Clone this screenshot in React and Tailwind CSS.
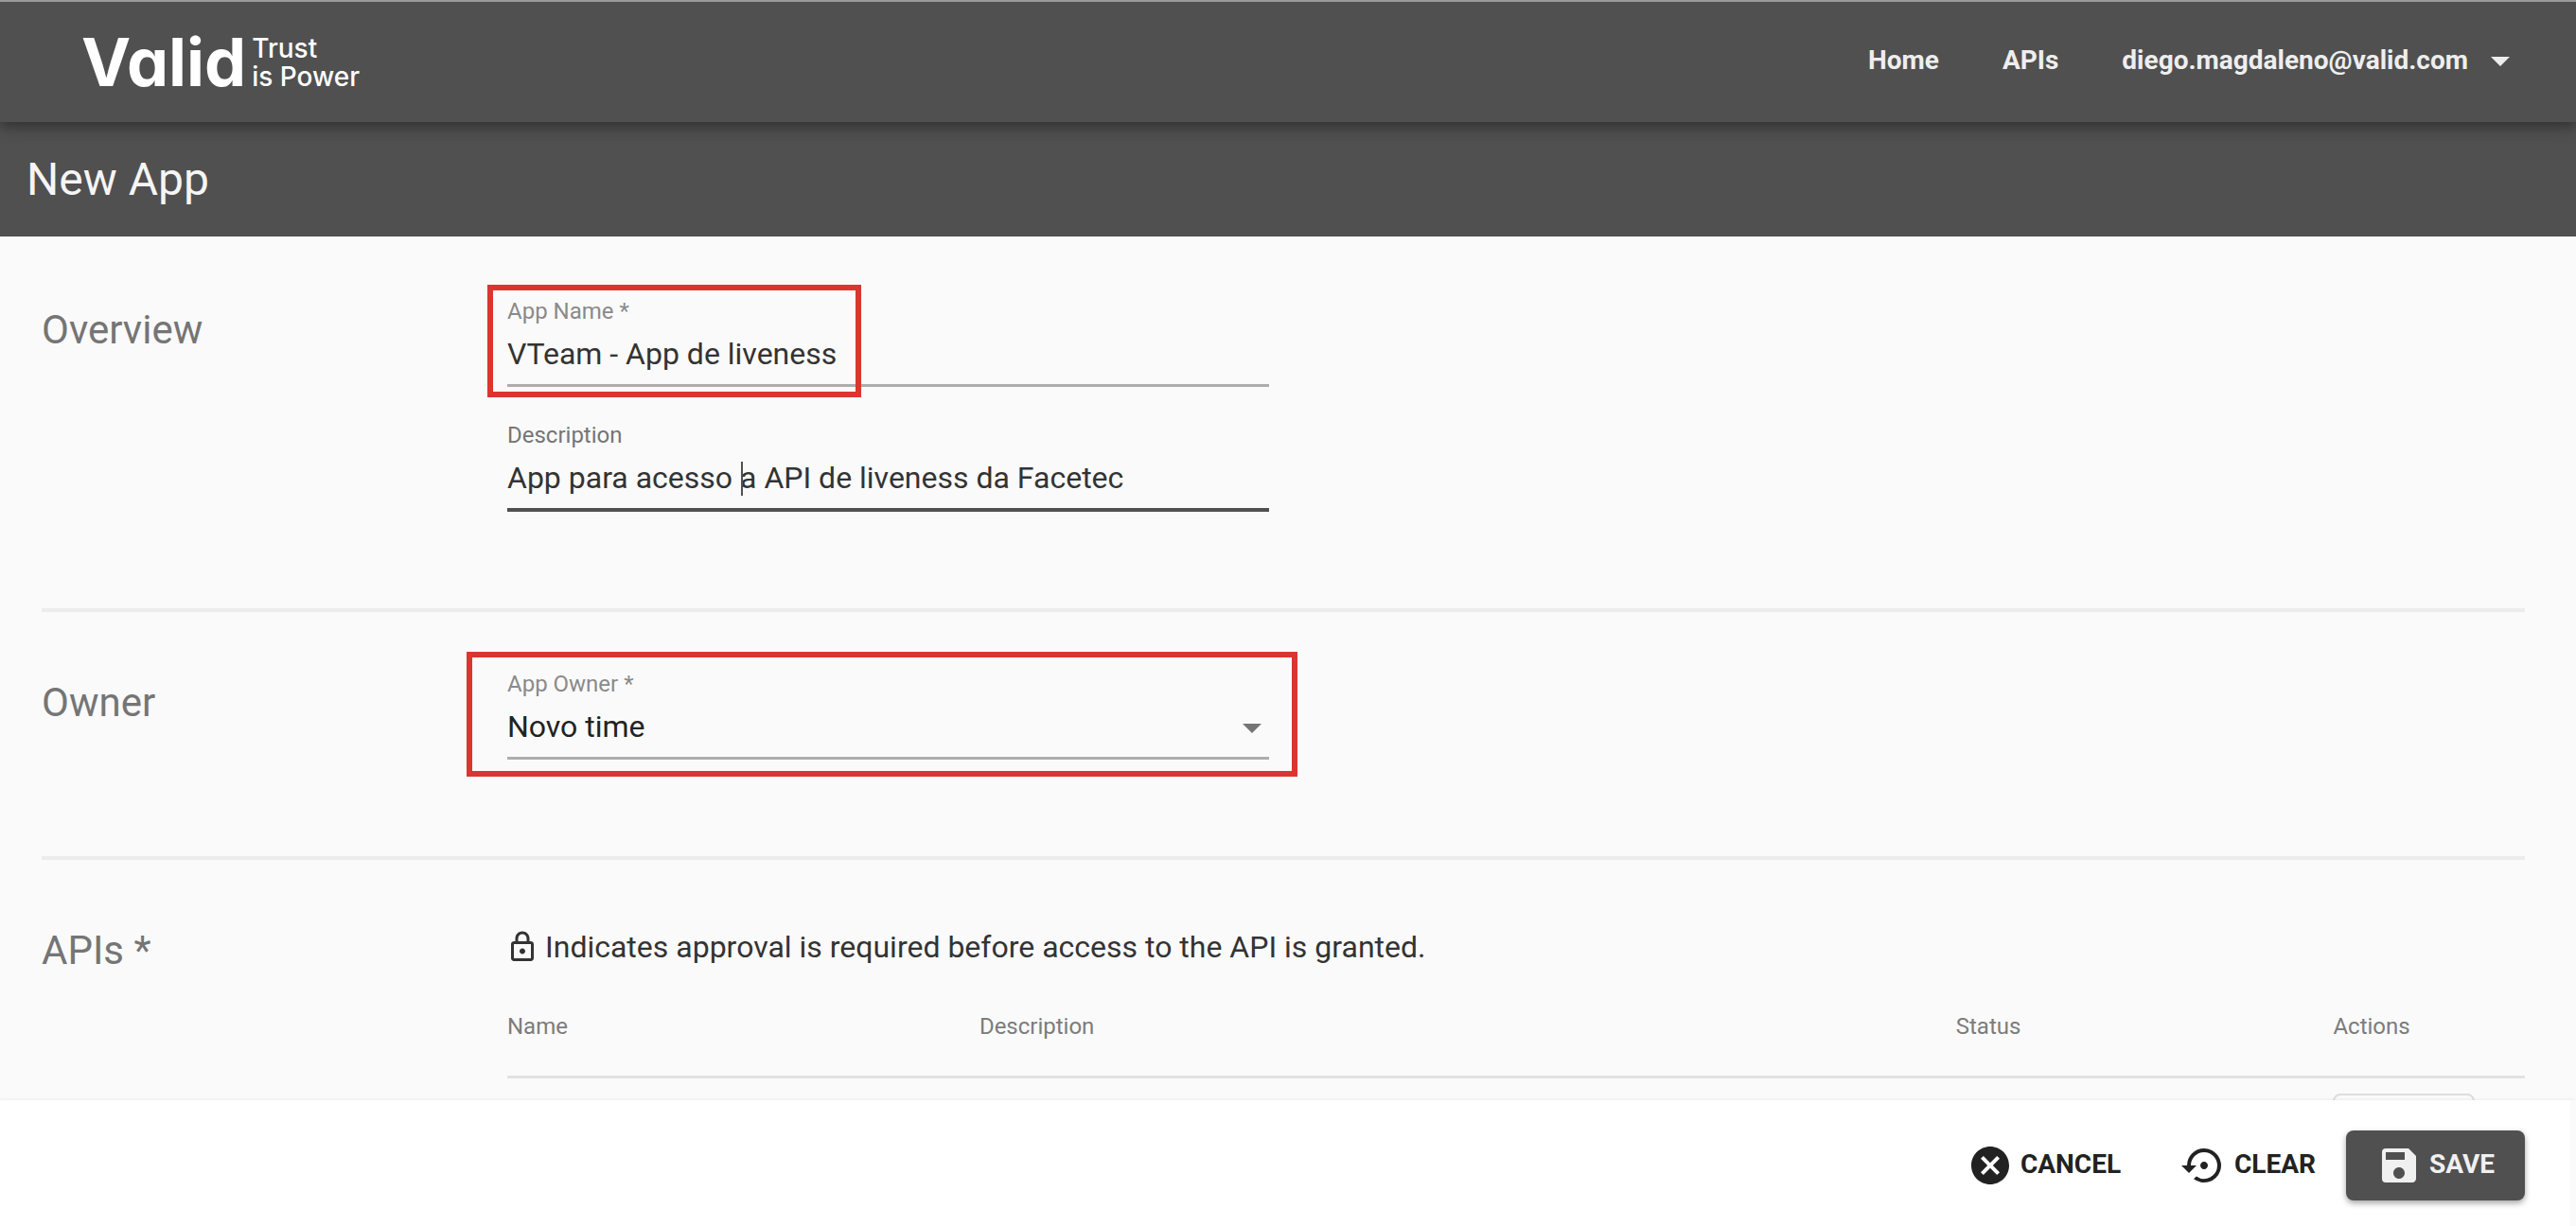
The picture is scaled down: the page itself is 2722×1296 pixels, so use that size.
import React from "react";
import {
  MdArrowDropDown,
  MdCancel,
  MdOutlineLock,
  MdSave,
  MdSettingsBackupRestore,
} from "react-icons/md";

function Logo() {
  return (
    <a
      href="#"
      className="flex items-center gap-1.5 text-white font-[Inter,sans-serif] [font-feature-settings:'cv11']"
    >
      <span className="text-[70px] leading-[52px] font-bold">Valid</span>
      <span className="text-[28px] leading-[30px] font-medium">
        Trust
        <br />
        is Power
      </span>
    </a>
  );
}

function Header() {
  return (
    <header className="relative z-10 flex h-[129px] shrink-0 items-center justify-between border-t-2 border-[#999999] bg-[#505050] pr-14 pl-[86px] shadow-[0_4px_9px_-2px_rgba(0,0,0,0.2),0_9px_11px_0_rgba(0,0,0,0.14),0_2px_23px_0_rgba(0,0,0,0.12)]">
      <Logo />
      <nav className="flex items-center gap-[67px] pb-1 text-[28px] leading-8 font-bold text-[#eeeeee]">
        <a href="#">Home</a>
        <a href="#">APIs</a>
        <button type="button" className="flex items-center gap-2.5 font-bold">
          diego.magdaleno@valid.com
          <MdArrowDropDown className="size-12" />
        </button>
      </nav>
    </header>
  );
}

function Section({ title, last, children }) {
  return (
    <section
      className={
        last
          ? "grid grid-cols-[3fr_13fr] pt-14"
          : "grid grid-cols-[3fr_13fr] border-b-4 border-[#ececec] pt-14 pb-[102px]"
      }
    >
      <h2 className="pt-4 text-[42px] leading-[48px] text-[#757575]">{title}</h2>
      <div className="min-w-0">{children}</div>
    </section>
  );
}

const labelClass = "block text-[24px] leading-10";

export default function App() {
  return (
    <div className="flex h-screen flex-col overflow-hidden bg-[#fafafa] font-[Roboto,sans-serif] text-[#333333]">
      <Header />
      <div className="flex h-[121px] shrink-0 items-center bg-[#505050] px-7">
        <h1 className="text-[48px] leading-[56px] font-normal text-[#f5f5f5]">New App</h1>
      </div>

      <main className="min-h-0 flex-1 overflow-hidden pt-[3px] pr-[54px] pl-11">
        <Section title="Overview">
          <div className="flex max-w-[805px] flex-col gap-[31px]">
            <div className="relative">
              <label htmlFor="app-name" className={`${labelClass} text-[#8a8a8a]`}>
                App Name *
              </label>
              <input
                id="app-name"
                defaultValue="VTeam - App de liveness"
                className="block h-[60px] w-full border-b-[3px] border-[#adadad] bg-transparent pb-2 text-[32px] outline-none"
              />
              <div className="pointer-events-none absolute -top-2 -left-[21px] h-[119px] w-[395px] border-6 border-[#dc3530]" />
            </div>
            <div className="relative">
              <label htmlFor="app-description" className={`${labelClass} text-[#757575]`}>
                Description
              </label>
              <input
                id="app-description"
                defaultValue="App para acesso a API de liveness da Facetec"
                className="block h-[61px] w-full border-b-4 border-[#505050] bg-transparent pb-2 text-[32px] outline-none"
              />
              <div className="pointer-events-none absolute top-12 left-[247px] h-9 w-0.5 bg-[#505050]" />
            </div>
          </div>
        </Section>

        <Section title="Owner">
          <div className="relative max-w-[805px]">
            <label htmlFor="app-owner" className={`${labelClass} text-[#8a8a8a]`}>
              App Owner *
            </label>
            <select
              id="app-owner"
              className="block h-[60px] w-full appearance-none border-b-[3px] border-[#adadad] bg-transparent pb-2 text-[32px] text-[#222222] outline-none"
            >
              <option>Novo time</option>
            </select>
            <MdArrowDropDown className="pointer-events-none absolute top-[42px] -right-1.5 size-12 text-[#757575]" />
            <div className="pointer-events-none absolute -top-3.5 -right-[30px] -bottom-[18px] -left-[43px] border-6 border-[#dc3530]" />
          </div>
        </Section>

        <Section title="APIs *" last>
          <p className="flex items-center gap-1.5 pt-3 text-[32px] leading-[48px]">
            <MdOutlineLock className="-ml-0.5 size-9 shrink-0" />
            Indicates approval is required before access to the API is granted.
          </p>
          <table className="w-full table-fixed border-collapse text-left">
            <thead>
              <tr className="border-b-[3px] border-[#e2e2e2] text-[24px] leading-[48px] text-[#7c7c7c]">
                <th className="w-[23.4%] pt-9 pb-7 font-normal">Name</th>
                <th className="w-[48.4%] pt-9 pb-7 font-normal">Description</th>
                <th className="w-[18.7%] pt-9 pb-7 font-normal">Status</th>
                <th className="pt-9 pb-7 font-normal">Actions</th>
              </tr>
            </thead>
            <tbody>
              <tr>
                <td />
                <td />
                <td />
                <td className="pt-4">
                  <button
                    type="button"
                    aria-label="API actions"
                    className="h-14 w-[150px] rounded-lg border-2 border-[#dddddd]"
                  />
                </td>
              </tr>
            </tbody>
          </table>
        </Section>
      </main>

      <footer className="relative z-10 flex shrink-0 justify-end border-r-6 border-[#fafafa] bg-white pt-8 pr-12 pb-[27px] text-[28px] leading-8 font-bold text-[#222222] shadow-[0_-1px_3px_0_rgba(0,0,0,0.06)]">
        <button type="button" className="flex h-[74px] items-center gap-2 px-8">
          <MdCancel className="size-12" />
          <span className="pb-0.5">CANCEL</span>
        </button>
        <button type="button" className="flex h-[74px] items-center gap-2 px-8">
          <MdSettingsBackupRestore className="size-12" />
          <span className="pb-0.5">CLEAR</span>
        </button>
        <button
          type="button"
          className="flex h-[74px] items-center gap-2 rounded-lg bg-[#505050] px-8 text-[#f0f0f0] shadow-[0_3px_6px_0_rgba(0,0,0,0.35)]"
        >
          <MdSave className="size-12" />
          <span className="pb-0.5">SAVE</span>
        </button>
      </footer>
    </div>
  );
}
